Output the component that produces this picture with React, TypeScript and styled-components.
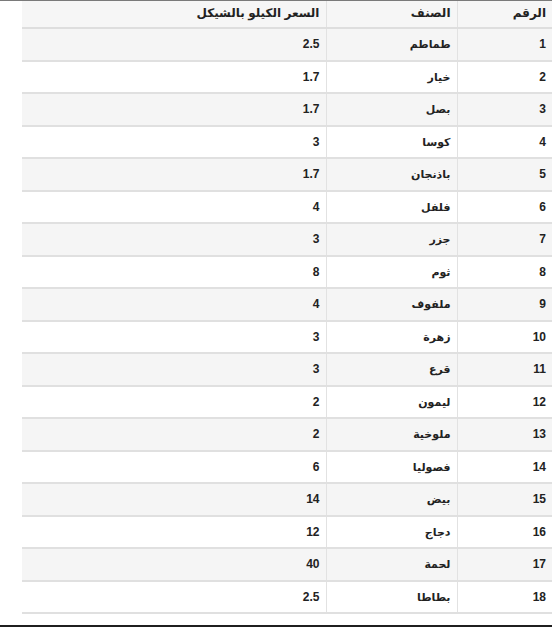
import React from 'react';
import styled, { createGlobalStyle } from 'styled-components';

const GlobalStyle = createGlobalStyle`
	html, body {
		margin: 0;
		padding: 0;
		background: #ffffff;
	}
	body {
		font-family: "Liberation Sans", "DejaVu Sans", sans-serif;
	}
`;

const Page = styled.div`
	width: 552px;
	height: 627px;
	display: flex;
	flex-direction: column;
	overflow: hidden;
	border-top: 1px solid #7a7a7a;
	box-sizing: border-box;
`;

const Main = styled.div`
	flex: 1;
	display: flex;
	justify-content: flex-end;
	align-items: flex-start;
`;

const Table = styled.table`
	width: 530px;
	flex: 0 0 530px;
	direction: rtl;
	border-collapse: collapse;
	table-layout: fixed;
	font-size: 12px;
	font-weight: bold;
	color: #222;
`;

const HeadCell = styled.th<{ $w: number }>`
	box-sizing: border-box;
	width: ${(p) => p.$w}px;
	height: 27px;
	padding: 0 6px 2px;
	text-align: right;
	background: #f6f6f6;
	border-bottom: 2px solid #dedede;
	border-left: 1px solid #e2e2e2;
	&:last-child {
		border-left: none;
	}
`;

const Row = styled.tr<{ $striped: boolean }>`
	background: ${(p) => (p.$striped ? '#f5f5f5' : '#ffffff')};
`;

const Cell = styled.td`
	box-sizing: border-box;
	height: 32.5px;
	padding: 0 6px;
	text-align: right;
	line-height: 14px;
	border-bottom: 2px solid #e0e0e0;
	border-left: 1px solid #e2e2e2;
	&:last-child {
		border-left: none;
	}
`;

const Name = styled.span`
	font-size: 11px;
`;

const BottomBar = styled.div`
	height: 2px;
	background: #1f1f1f;
`;

const items: [string, string][] = [
	['طماطم', '2.5'],
	['خيار', '1.7'],
	['بصل', '1.7'],
	['كوسا', '3'],
	['باذنجان', '1.7'],
	['فلفل', '4'],
	['جزر', '3'],
	['ثوم', '8'],
	['ملفوف', '4'],
	['زهرة', '3'],
	['قرع', '3'],
	['ليمون', '2'],
	['ملوخية', '2'],
	['فصوليا', '6'],
	['بيض', '14'],
	['دجاج', '12'],
	['لحمة', '40'],
	['بطاطا', '2.5'],
];

const App = () => (
	<>
		<GlobalStyle />
		<Page>
			<Main>
				<Table>
					<thead>
						<tr>
							<HeadCell $w={95}>الرقم</HeadCell>
							<HeadCell $w={131}>الصنف</HeadCell>
							<HeadCell $w={304}>السعر الكيلو بالشيكل</HeadCell>
						</tr>
					</thead>
					<tbody>
						{items.map(([name, price], i) => (
							<Row key={name} $striped={i % 2 === 0}>
								<Cell>{i + 1}</Cell>
								<Cell>
									<Name>{name}</Name>
								</Cell>
								<Cell>{price}</Cell>
							</Row>
						))}
					</tbody>
				</Table>
			</Main>
			<BottomBar />
		</Page>
	</>
);

export default App;
